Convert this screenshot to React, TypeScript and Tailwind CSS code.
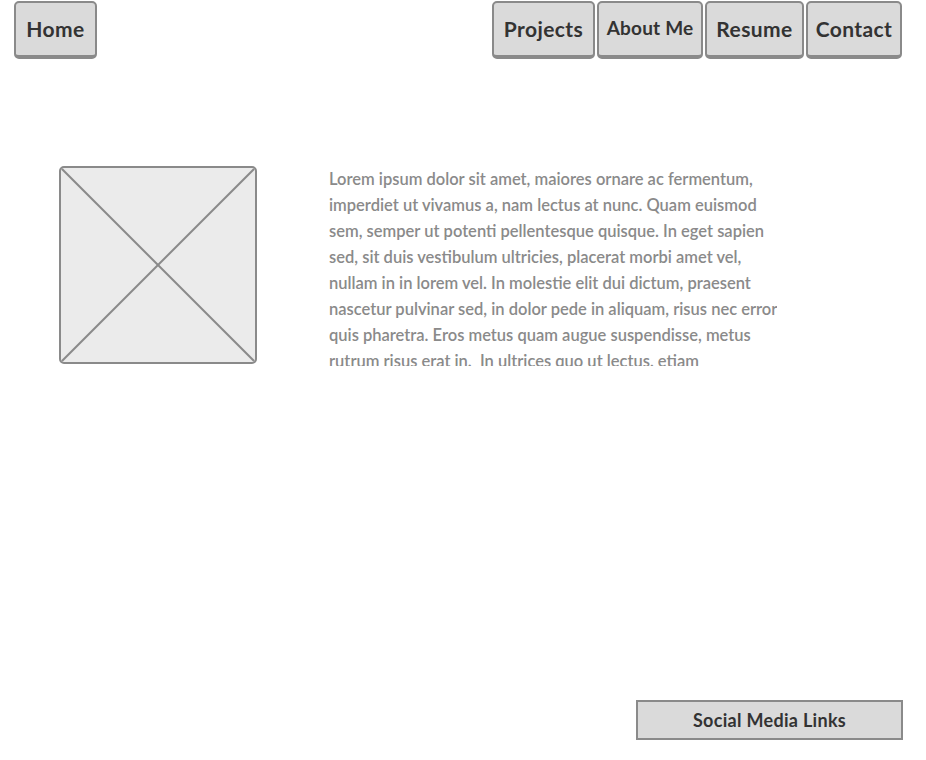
import React from "react";

const font = { fontFamily: '"Lato", "Noto Sans", sans-serif' };

function NavButton({ label, w, cls = "" }: { label: string; w: string; cls?: string }) {
  return (
    <div
      className={`${w} h-[58px] flex items-center justify-center rounded-[5px] border-2 border-b-4 border-[#8a8a8a] bg-[#dadada] text-[#333333] font-bold ${cls}`}
    >
      {label}
    </div>
  );
}

const lines = [
  "Lorem ipsum dolor sit amet, maiores ornare ac fermentum,",
  "imperdiet ut vivamus a, nam lectus at nunc. Quam euismod",
  "sem, semper ut potenti pellentesque quisque. In eget sapien",
  "sed, sit duis vestibulum ultricies, placerat morbi amet vel,",
  "nullam in in lorem vel. In molestie elit dui dictum, praesent",
  "nascetur pulvinar sed, in dolor pede in aliquam, risus nec error",
  "quis pharetra. Eros metus quam augue suspendisse, metus",
  "rutrum risus erat in.  In ultrices quo ut lectus, etiam",
];

export default function App() {
  return (
    <div className="w-[926px] h-[760px] bg-white flex flex-col" style={font}>
      <div className="flex justify-between pl-[14px] pr-[24px] pt-[1px]">
        <NavButton label="Home" w="w-[83px]" cls="text-[21px] tracking-[0.4px]" />
        <div className="flex gap-[2px]">
          <NavButton label="Projects" w="w-[103px]" cls="text-[21px] tracking-[0.4px]" />
          <NavButton label="About Me" w="w-[106px]" cls="text-[19px] pb-[1px] tracking-[0.2px]" />
          <NavButton label="Resume" w="w-[99px]" cls="text-[21px] tracking-[0.4px]" />
          <NavButton label="Contact" w="w-[96px]" cls="text-[21px] tracking-[0.4px]" />
        </div>
      </div>
      <div className="flex mt-[107px] pl-[59px]">
        <div className="w-[198px] h-[198px] rounded-[5px] border-2 border-[#8a8a8a] bg-[#ebebeb] overflow-hidden">
          <svg width="194" height="194" viewBox="0 0 194 194" className="block">
            <line x1="0" y1="0" x2="194" y2="194" stroke="#8a8a8a" strokeWidth="2" />
            <line x1="194" y1="0" x2="0" y2="194" stroke="#8a8a8a" strokeWidth="2" />
          </svg>
        </div>
        <div className="ml-[72px] h-[200px] overflow-hidden">
          <p className="text-[16.5px] leading-[26px] font-semibold text-[#8a8a8a] whitespace-pre">
            {lines.map((l, i) => (
              <span key={i} className="block">
                {l}
              </span>
            ))}
          </p>
        </div>
      </div>
      <div className="flex-1" />
      <div className="flex justify-end pr-[23px] pb-[20px]">
        <div className="w-[267px] h-[40px] border-2 border-[#8a8a8a] bg-[#dadada] flex items-center justify-center text-[#333333] font-bold text-[18px] tracking-[0.3px]">
          Social Media Links
        </div>
      </div>
    </div>
  );
}
